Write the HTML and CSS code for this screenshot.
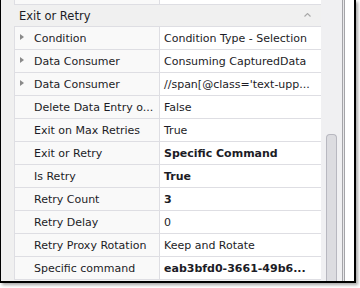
FILE: index.html
```html
<!DOCTYPE html>
<html lang="en">
<head>
    <meta charset="UTF-8">
    <title>Exit or Retry</title>
    <link rel="stylesheet" href="styles.css">
</head>
<body>
    <div class="frame">
        <div class="grid">
            <div class="row partial">
                <div class="name"></div>
                <div class="value"></div>
            </div>
            <div class="category">
                <span>Exit or Retry</span>
                <svg class="chevron" width="7" height="4" viewBox="0 0 7 4">
                    <path d="M0.5 3.5 L3.5 0.5 L6.5 3.5" fill="none" stroke="#a8a8a8" stroke-width="1.1"/>
                </svg>
            </div>
            <div class="rows">
                <div class="row">
                    <div class="name"><span class="expander"></span>Condition</div>
                    <div class="value">Condition Type - Selection</div>
                </div>
                <div class="row">
                    <div class="name"><span class="expander"></span>Data Consumer</div>
                    <div class="value">Consuming CapturedData</div>
                </div>
                <div class="row">
                    <div class="name"><span class="expander"></span>Data Consumer</div>
                    <div class="value">//span[@class='text-upp...</div>
                </div>
                <div class="row">
                    <div class="name">Delete Data Entry o...</div>
                    <div class="value">False</div>
                </div>
                <div class="row">
                    <div class="name">Exit on Max Retries</div>
                    <div class="value">True</div>
                </div>
                <div class="row">
                    <div class="name">Exit or Retry</div>
                    <div class="value bold">Specific Command</div>
                </div>
                <div class="row">
                    <div class="name">Is Retry</div>
                    <div class="value bold">True</div>
                </div>
                <div class="row">
                    <div class="name">Retry Count</div>
                    <div class="value bold">3</div>
                </div>
                <div class="row">
                    <div class="name">Retry Delay</div>
                    <div class="value">0</div>
                </div>
                <div class="row">
                    <div class="name">Retry Proxy Rotation</div>
                    <div class="value">Keep and Rotate</div>
                </div>
                <div class="row">
                    <div class="name">Specific command</div>
                    <div class="value bold">eab3bfd0-3661-49b6...</div>
                </div>
            </div>
        </div>
        <div class="scrollbar">
            <div class="thumb"></div>
        </div>
        <div class="edge"></div>
    </div>
</body>
</html>
```

FILE: styles.css
```css
/* 属性面板 */
:root {
    --gutter: #f0f0f0;
    --line: #dedee3;
    --text: #1c1c26;
    --name-bg: #f9f9f9;
}

* {
    margin: 0;
    padding: 0;
    box-sizing: border-box;
}

body {
    font-family: 'DejaVu Sans', Verdana, sans-serif;
    font-size: 11px;
    color: var(--text);
    background: #ffffff;
    width: 360px;
    height: 288px;
    overflow: hidden;
}

/* 外框 */
.frame {
    display: flex;
    width: 356px;
    height: 283px;
    border-left: 1px solid #000;
    border-right: 2px solid #000;
    border-bottom: 2px solid #000;
    background: #ffffff;
    box-shadow: 2px 2px 3px rgba(0, 0, 0, 0.35);
}

.grid {
    width: 320px;
    background: var(--gutter);
    display: flex;
    flex-direction: column;
}

/* 分类标题 */
.category {
    height: 21px;
    display: flex;
    align-items: center;
    justify-content: space-between;
    padding: 0 10px 0 18px;
    font-size: 11.5px;
}

.chevron {
    display: block;
    margin-top: -1px;
}

.rows {
    margin-left: 13px;
    border-top: 1px solid var(--line);
}

.row {
    display: flex;
    height: 23px;
    border-left: 1px solid var(--line);
    border-bottom: 1px solid var(--line);
}

.row.partial {
    height: 5px;
    margin-left: 13px;
}

.name {
    width: 145px;
    flex-shrink: 0;
    padding-left: 19px;
    background: var(--name-bg);
    border-right: 1px solid var(--line);
    display: flex;
    align-items: center;
    position: relative;
    white-space: nowrap;
    overflow: hidden;
}

.value {
    flex: 1;
    padding-left: 4px;
    background: #ffffff;
    display: flex;
    align-items: center;
    white-space: nowrap;
    overflow: hidden;
}

.bold {
    font-weight: bold;
}

/* 展开三角 */
.expander {
    position: absolute;
    left: 5px;
    top: 7px;
    width: 0;
    height: 0;
    border-top: 3.5px solid transparent;
    border-bottom: 3.5px solid transparent;
    border-left: 4px solid #8a8a8a;
}

/* 滚动条 */
.scrollbar {
    width: 21px;
    background: #f0f0f2;
    display: flex;
    flex-direction: column;
    align-items: center;
}

.thumb {
    width: 11px;
    margin-top: 134px;
    flex: 1;
    background: #dcdce0;
    border: 1px solid #b8b8c0;
    border-bottom: none;
    border-radius: 4px 4px 0 0;
}

.edge {
    width: 3px;
    margin-right: 9px;
    border-left: 1px solid #a4a4a8;
    border-right: 1px solid #a4a4a8;
    background: #e8e8ea;
}
```
